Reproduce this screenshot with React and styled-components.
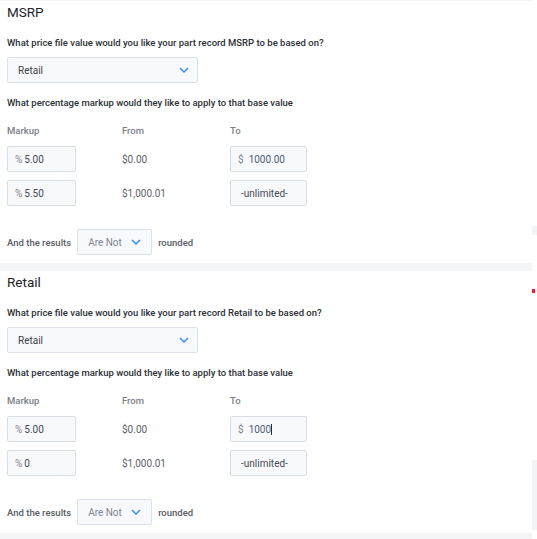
import React from 'react'
import styled, { createGlobalStyle } from 'styled-components'

const GlobalStyle = createGlobalStyle`
  body {
    margin: 0;
    background: #ffffff;
    font-family: Roboto, "Liberation Sans", sans-serif;
  }
`

const Page = styled.div`
  display: flex;
  flex-direction: row;
  width: 537px;
  height: 539px;
  overflow: hidden;
`

const Main = styled.div`
  display: flex;
  flex-direction: column;
  gap: 8px;
  width: 532px;
  padding: 1px 0 6px;
  background: #f4f5f7;
`

const Rail = styled.div`
  display: flex;
  flex-direction: column;
  width: 5px;
`

const RailBlock = styled.div`
  height: ${(p) => p.h}px;
  margin-top: ${(p) => p.top}px;
  background: ${(p) => p.color || '#f3f4f6'};
  width: ${(p) => p.w || 5}px;
`

const Card = styled.section`
  background: #ffffff;
  padding: 3px 7px 8px;
`

const Title = styled.h2`
  margin: 0;
  font-size: 13.5px;
  line-height: 16px;
  font-weight: 400;
  color: #1f2329;
`

const Question = styled.p`
  margin: ${(p) => p.top}px 0 0;
  font-size: 9.5px;
  line-height: 12px;
  font-weight: 500;
  color: #2b2f36;
`

const Select = styled.div`
  display: flex;
  align-items: center;
  justify-content: space-between;
  box-sizing: border-box;
  width: ${(p) => p.w}px;
  height: 26px;
  padding: 0 ${(p) => p.pr}px 0 ${(p) => p.pl}px;
  background: #f7f9fc;
  border: 1px solid #dde2ea;
  border-radius: 2px;
  font-size: 10px;
  font-weight: 400;
  color: ${(p) => p.muted ? '#80858e' : '#3d4148'};
`

const SelectRow = styled.div`
  margin-top: 8px;
`

const Grid = styled.div`
  display: grid;
  grid-template-columns: 115px 108px 77px;
  row-gap: 8px;
  margin-top: ${(p) => p.top}px;
  align-items: center;
`

const Header = styled.div`
  font-size: 9.5px;
  line-height: 12px;
  font-weight: 500;
  color: #7a7f87;
  margin-bottom: 1px;
`

const Input = styled.div`
  display: flex;
  align-items: center;
  gap: ${(p) => p.gap || 2}px;
  box-sizing: border-box;
  width: ${(p) => p.w}px;
  height: 26px;
  padding-left: ${(p) => p.pl || 7}px;
  background: #f8f9fb;
  border: 1px solid #d9dee6;
  border-radius: 2px;
  font-size: 10px;
  color: #444a55;
`

const Unit = styled.span`
  color: #80858e;
`

const Value = styled.span`
  color: ${(p) => p.blue ? '#4f5b78' : '#444a55'};
  ${(p) => p.caret && 'border-right: 1px solid #1b2a4a;'}
`

const Amount = styled.div`
  font-size: 10px;
  color: #5c6169;
`

const Results = styled.div`
  display: flex;
  align-items: center;
  gap: 6px;
  margin-top: 23px;
  font-size: 9.5px;
  font-weight: 500;
  color: #585d66;
`

const Chevron = () => (
  <svg width="10" height="6" viewBox="0 0 10 6">
    <path d="M1 1l4 4 4-4" fill="none" stroke="#3f8ef0" strokeWidth="1.5" />
  </svg>
)

const Section = ({ title, rows }) => (
  <Card>
    <Title>{title}</Title>
    <Question top={17}>
      What price file value would you like your part record {title} to be based on?
    </Question>
    <SelectRow>
      <Select w={191} pl={10} pr={8}>
        Retail
        <Chevron />
      </Select>
    </SelectRow>
    <Question top={14}>What percentage markup would they like to apply to that base value</Question>
    <Grid top={16}>
      <Header>Markup</Header>
      <Header>From</Header>
      <Header>To</Header>
      {rows.map((row, i) => (
        <React.Fragment key={i}>
          <Input w={69}>
            <Unit>%</Unit>
            <Value>{row.markup}</Value>
          </Input>
          <Amount>{row.from}</Amount>
          {row.to ? (
            <Input w={77} gap={5}>
              <Unit>$</Unit>
              <Value blue caret={row.caret}>{row.to}</Value>
            </Input>
          ) : (
            <Input w={77} pl={10}>
              <Value>-unlimited-</Value>
            </Input>
          )}
        </React.Fragment>
      ))}
    </Grid>
    <Results>
      And the results
      <Select w={75} pl={10} pr={10} muted>
        Are Not
        <Chevron />
      </Select>
      rounded
    </Results>
  </Card>
)

const App = () => {
  return (
    <>
      <GlobalStyle />
      <Page>
        <Main>
          <Section
            title="MSRP"
            rows={[
              { markup: '5.00', from: '$0.00', to: '1000.00' },
              { markup: '5.50', from: '$1,000.01' },
            ]}
          />
          <Section
            title="Retail"
            rows={[
              { markup: '5.00', from: '$0.00', to: '1000', caret: true },
              { markup: '0', from: '$1,000.01' },
            ]}
          />
        </Main>
        <Rail>
          <RailBlock top={226} h={9} />
          <RailBlock top={54} h={4} w={3} color="#e8202a" />
          <RailBlock top={167} h={70} />
        </Rail>
      </Page>
    </>
  )
}

export default App
